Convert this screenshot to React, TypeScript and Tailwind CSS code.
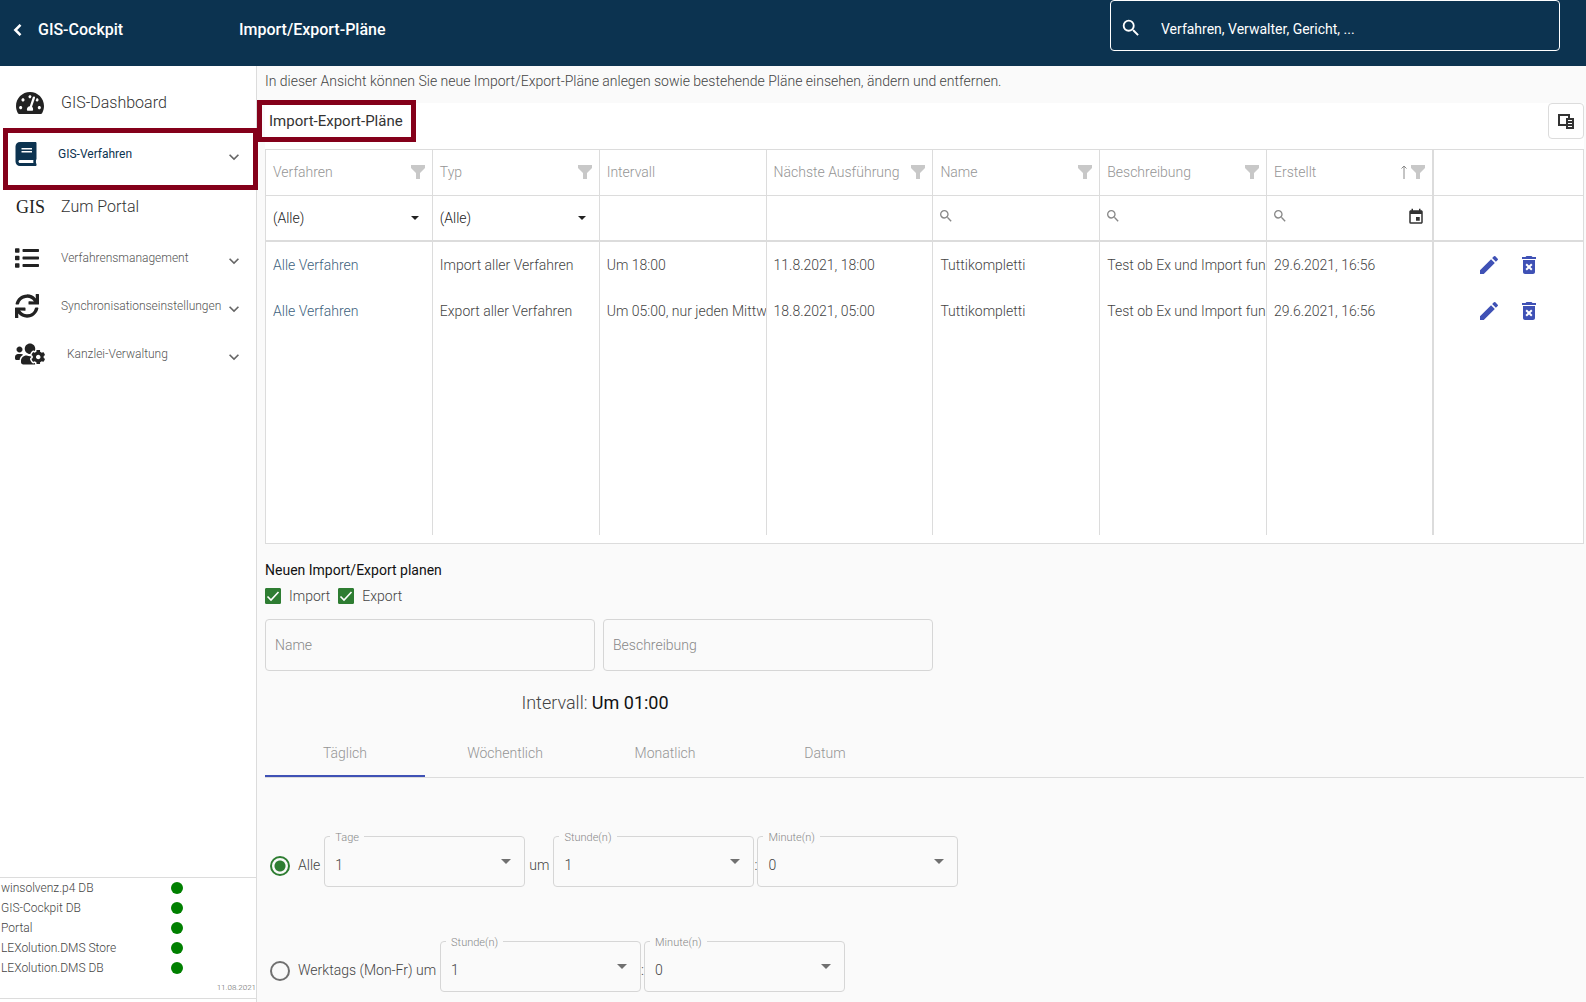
import { useState } from 'react';
import type { ReactNode } from 'react';
import { FaBook, FaList, FaSync, FaTachometerAlt, FaUsersCog } from 'react-icons/fa';
import { MdDeleteForever, MdEdit, MdEvent, MdExpandMore, MdSearch } from 'react-icons/md';

const columns = [
  { title: 'Verfahren', filter: true, editor: 'select' },
  { title: 'Typ', filter: true, editor: 'select' },
  { title: 'Intervall', filter: false, editor: 'none' },
  { title: 'Nächste Ausführung', filter: true, editor: 'none' },
  { title: 'Name', filter: true, editor: 'search' },
  { title: 'Beschreibung', filter: true, editor: 'search' },
  { title: 'Erstellt', filter: true, editor: 'date' },
];

const plans = [
  ['Alle Verfahren', 'Import aller Verfahren', 'Um 18:00', '11.8.2021, 18:00', 'Tuttikompletti', 'Test ob Ex und Import funk', '29.6.2021, 16:56'],
  ['Alle Verfahren', 'Export aller Verfahren', 'Um 05:00, nur jeden Mittw', '18.8.2021, 05:00', 'Tuttikompletti', 'Test ob Ex und Import funk', '29.6.2021, 16:56'],
];

const services = ['winsolvenz.p4 DB', 'GIS-Cockpit DB', 'Portal', 'LEXolution.DMS Store', 'LEXolution.DMS DB'];

const tabs = ['Täglich', 'Wöchentlich', 'Monatlich', 'Datum'];

function FilterIcon() {
  return (
    <svg viewBox="0 0 14 14" className="w-3.5 h-3.5 mb-0.5 shrink-0" fill="#c8c8c8">
      <path d="M0 0h14v3L9 8v6H5V8L0 3z" />
    </svg>
  );
}

function SortIcon() {
  return (
    <svg viewBox="0 0 6 14" className="w-1.5 h-3.5 mb-0.5 shrink-0" fill="none" stroke="#8a8a8a">
      <path d="M3 14V1M.5 3.5L3 1l2.5 2.5" />
    </svg>
  );
}

function CaretIcon({ className }: { className: string }) {
  return (
    <svg viewBox="0 0 10 5" className={className} fill="currentColor">
      <path d="M0 0h10L5 5z" />
    </svg>
  );
}

function ColumnChooserIcon() {
  return (
    <svg viewBox="0 0 16 15" className="w-4 h-[15px]">
      <path d="M1 1h10v10H1z" fill="none" stroke="#333" strokeWidth="2" />
      <path d="M8 4h8v11H8z" fill="#333" />
      <path d="M10 6.500h4M10 9.500h4M10 12.500h4" stroke="#fff" />
    </svg>
  );
}

function Sidebar() {
  return (
    <aside className="relative z-10 w-[257px] shrink-0 flex flex-col bg-white border-r border-[#dcdcdc]">
      <nav className="pt-2.5">
        <a href="#dashboard" className="flex items-center h-[52px] pl-4 pt-0.5 text-base text-[#333]">
          <span className="w-[45px]"><FaTachometerAlt className="w-7 h-7 text-[#222]" /></span>
          GIS-Dashboard
        </a>
        <div className="relative">
          <button className="w-full flex items-center h-[52px] pl-[15px] pr-3 text-[12px] font-normal text-[#0c3350]">
            <span className="w-[43px]"><FaBook className="w-[22px] h-6" /></span>
            GIS-Verfahren
            <MdExpandMore className="ml-auto mt-1.5 w-5 h-5 text-[#666]" />
          </button>
          <div className="absolute left-[3px] top-0 w-[255px] h-[62px] border-5 border-[#84001a] pointer-events-none" />
        </div>
        <a href="#portal" className="flex items-center h-[52px] pl-4 pt-0.5 text-base text-[#333]">
          <span className="w-[45px] font-['Liberation_Serif',serif] font-normal text-lg text-[#222]">GIS</span>
          Zum Portal
        </a>
        <div className="pt-0.5">
          <SidebarGroup icon={<FaList className="w-6 h-6" />} label="Verfahrensmanagement" />
          <SidebarGroup icon={<FaSync className="w-6 h-6" />} label="Synchronisationseinstellungen" />
          <SidebarGroup icon={<FaUsersCog className="w-[30px] h-6 mr-[22px]" />} label="Kanzlei-Verwaltung" />
        </div>
      </nav>

      {/* Service status */}
      <div className="mt-auto mb-[3px] border-y border-[#dcdcdc]">
        <ul className="text-[12px] leading-5 text-[#444]">
          {services.map((name) => (
            <li key={name} className="flex items-center pl-px">
              <span className="w-[170px]">{name}</span>
              <span className="w-3 h-3 rounded-full bg-[#008000]" />
            </li>
          ))}
        </ul>
        <p className="text-right text-[8px] leading-5 text-[#666]">11.08.2021</p>
      </div>
    </aside>
  );
}

function SidebarGroup({ icon, label }: { icon: ReactNode; label: string }) {
  return (
    <button className="w-full flex items-center h-12 pl-[15px] pr-3 text-[12px] text-[#555]">
      <span className="min-w-[46px] text-[#222]">{icon}</span>
      {label}
      <MdExpandMore className="ml-auto mt-1.5 w-5 h-5 shrink-0 text-[#666]" />
    </button>
  );
}

function PlanTable() {
  return (
    <div className="bg-white border border-[#dcdcdc] pb-2">
      <table className="w-full table-fixed border-separate border-spacing-0 text-left text-[14px] text-[#444]">
        <thead>
          <tr className="h-[46px] text-[#959595]">
            {columns.map((col) => (
              <th key={col.title} className="px-[7px] font-light border-r border-b border-[#dcdcdc] nth-7:border-r-2">
                <div className="flex items-center gap-1">
                  <span className="flex-1 whitespace-nowrap">{col.title}</span>
                  {col.title === 'Erstellt' && <SortIcon />}
                  {col.filter && <FilterIcon />}
                </div>
              </th>
            ))}
            <th className="w-[149px] border-b border-[#dcdcdc]" />
          </tr>
          <tr className="h-[46px]">
            {columns.map((col) => (
              <td key={col.title} className="px-[7px] border-r border-b-2 border-[#dcdcdc] nth-7:border-r-2">
                {col.editor === 'select' && (
                  <div className="relative flex items-center">
                    <select aria-label={col.title} className="w-full appearance-none outline-none text-[#222]">
                      <option>(Alle)</option>
                    </select>
                    <CaretIcon className="absolute right-1.5 w-2 h-1 text-[#222] pointer-events-none" />
                  </div>
                )}
                {(col.editor === 'search' || col.editor === 'date') && (
                  <div className="flex items-center">
                    <MdSearch className="w-4 h-4 -ml-0.5 mb-1 shrink-0 text-[#888]" />
                    <input aria-label={col.title} className="min-w-0 flex-1 outline-none" />
                    {col.editor === 'date' && (
                      <button aria-label="Datum wählen" className="pb-0.5"><MdEvent className="w-[18px] h-[18px] text-[#333]" /></button>
                    )}
                  </div>
                )}
              </td>
            ))}
            <td className="border-b-2 border-[#dcdcdc]" />
          </tr>
        </thead>
        <tbody>
          {plans.map((row) => (
            <tr key={row[1]} className="h-[46px]">
              {row.map((value, i) => (
                <td key={i} className="pl-[7px] border-r border-[#dcdcdc] first:text-[#3d5f7d] nth-7:border-r-2">
                  <div className="overflow-hidden whitespace-nowrap">
                    {i === 0 ? <a href="#verfahren">{value}</a> : value}
                  </div>
                </td>
              ))}
              <td>
                <div className="flex justify-center gap-4 text-[#3f51b5]">
                  <button aria-label="Bearbeiten"><MdEdit className="w-6 h-6" /></button>
                  <button aria-label="Löschen"><MdDeleteForever className="w-6 h-6" /></button>
                </div>
              </td>
            </tr>
          ))}
          <tr className="h-[201px]">
            {columns.map((col) => (
              <td key={col.title} className="border-r border-[#dcdcdc] nth-7:border-r-2" />
            ))}
            <td />
          </tr>
        </tbody>
      </table>
    </div>
  );
}

function Checkbox({ label }: { label: string }) {
  return (
    <label className="flex items-center gap-2">
      <span className="relative flex">
        <input type="checkbox" defaultChecked className="peer w-4 h-4 appearance-none rounded-[1px] border border-[#2e7d32] checked:bg-[#2e7d32]" />
        <svg viewBox="0 0 16 16" className="absolute inset-0 hidden peer-checked:block pointer-events-none" fill="none" stroke="#fff" strokeWidth="1.600">
          <path d="M2.500 8.500L6 12l7.500-8" />
        </svg>
      </span>
      {label}
    </label>
  );
}

function SelectBox({ id, label, value }: { id: string; label: string; value: string }) {
  return (
    <div className="relative w-[201px] h-[51px]">
      <label htmlFor={id} className="absolute left-1.5 -top-1.5 px-[5px] bg-[#fafafa] text-[11px] leading-4 text-[#888]">{label}</label>
      <select id={id} className="w-full h-full px-2.5 pt-2 appearance-none rounded-[4px] border border-[#d6d6d6] outline-none">
        <option>{value}</option>
      </select>
      <CaretIcon className="absolute right-3.5 top-[23px] w-2.5 h-[5px] text-[#707070] pointer-events-none" />
    </div>
  );
}

function TimeSelect({ id }: { id: string }) {
  return (
    <div className="flex items-center">
      <SelectBox id={`${id}-hours`} label="Stunde(n)" value="1" />
      <span className="w-[3px] pt-2">:</span>
      <SelectBox id={`${id}-minutes`} label="Minute(n)" value="0" />
    </div>
  );
}

function Radio({ id, label, checked, onChange }: { id: string; label: string; checked: boolean; onChange: () => void }) {
  return (
    <div className="flex items-center gap-2 pl-[5px] pt-2">
      <input
        id={id}
        type="radio"
        name="schedule"
        checked={checked}
        onChange={onChange}
        className="w-5 h-5 appearance-none rounded-full border-2 border-[#707070] checked:border-[#2e7d32] checked:bg-[radial-gradient(circle,#2e7d32_5px,transparent_6px)]"
      />
      <label htmlFor={id}>{label}</label>
    </div>
  );
}

function PlanForm() {
  const [tab, setTab] = useState('Täglich');
  const [mode, setMode] = useState('daily');

  return (
    <form className="pt-4">
      <h2 className="leading-5 font-normal text-[#111]">Neuen Import/Export planen</h2>
      <div className="flex gap-2 mt-1.5 leading-5">
        <Checkbox label="Import" />
        <Checkbox label="Export" />
      </div>
      <div className="flex gap-2 mt-[13px]">
        <input aria-label="Name" placeholder="Name" className="w-[330px] h-[52px] px-[9px] rounded-[4px] border border-[#d6d6d6] outline-none placeholder:text-[#888]" />
        <input aria-label="Beschreibung" placeholder="Beschreibung" className="w-[330px] h-[52px] px-[9px] rounded-[4px] border border-[#d6d6d6] outline-none placeholder:text-[#888]" />
      </div>
      <p className="w-[660px] mt-[18px] text-center text-lg leading-7">
        Intervall: <span className="font-normal text-[#111]">Um 01:00</span>
      </p>

      <div role="tablist" className="flex mt-3 border-b border-[#dcdcdc]">
        {tabs.map((name) => (
          <button
            key={name}
            type="button"
            role="tab"
            aria-selected={tab === name}
            onClick={() => setTab(name)}
            className={`w-40 h-12 pt-0.5 border-b-2 text-[#959595] ${tab === name ? 'border-[#3f51b5]' : 'border-transparent'}`}
          >
            {name}
          </button>
        ))}
      </div>

      <div className="flex items-center gap-1 mt-[58px]">
        <Radio id="daily" label="Alle" checked={mode === 'daily'} onChange={() => setMode('daily')} />
        <SelectBox id="days" label="Tage" value="1" />
        <span className="pt-2">um</span>
        <TimeSelect id="daily" />
      </div>
      <div className="flex items-center gap-1 mt-[54px] mb-2">
        <Radio id="workdays" label="Werktags (Mon-Fr) um" checked={mode === 'workdays'} onChange={() => setMode('workdays')} />
        <TimeSelect id="workday" />
      </div>
    </form>
  );
}

export default function App() {
  return (
    <div className="min-h-screen flex flex-col bg-[#fafafa] font-['Roboto',sans-serif] font-light text-[14px] text-[#444]">
      <header className="flex items-start h-[66px] bg-[#0c3350] text-white">
        <a href="#back" className="flex items-center w-[239px] h-[59px] pl-[13px] text-base font-medium">
          <svg viewBox="0 0 9 14" className="w-[9px] h-3 mr-4" fill="none" stroke="currentColor" strokeWidth="3">
            <path d="M8 1L2 7l6 6" />
          </svg>
          GIS-Cockpit
        </a>
        <h1 className="flex items-center h-[59px] text-base font-medium">Import/Export-Pläne</h1>
        <label className="ml-auto mr-[26px] flex items-center gap-[19px] w-[450px] h-[51px] pl-[9px] border border-white rounded-[4px]">
          <MdSearch className="w-[22px] h-[22px] mt-1 shrink-0" stroke="currentColor" />
          <input aria-label="Suche" placeholder="Verfahren, Verwalter, Gericht, ..." className="flex-1 pt-2 outline-none font-normal placeholder:text-white" />
        </label>
      </header>

      <div className="flex-1 flex">
        <Sidebar />
        <main className="flex-1 min-w-0 pl-2 pr-0.5">
          <p className="h-[37px] pt-[5px] leading-5">
            In dieser Ansicht können Sie neue Import/Export-Pläne anlegen sowie bestehende Pläne einsehen, ändern und entfernen.
          </p>
          <div className="flex items-start justify-between h-[46px] bg-white">
            <div className="relative h-9 pl-1 flex items-center">
              <h2 className="text-[15px] font-normal text-[#333]">Import-Export-Pläne</h2>
              <div className="absolute -left-2 -right-[13px] -top-[3px] h-[42px] border-5 border-[#84001a] pointer-events-none" />
            </div>
            <button aria-label="Spaltenauswahl" className="flex items-center justify-center w-9 h-9 rounded-[4px] border border-[#dcdcdc]">
              <ColumnChooserIcon />
            </button>
          </div>
          <PlanTable />
          <PlanForm />
        </main>
      </div>
    </div>
  );
}
